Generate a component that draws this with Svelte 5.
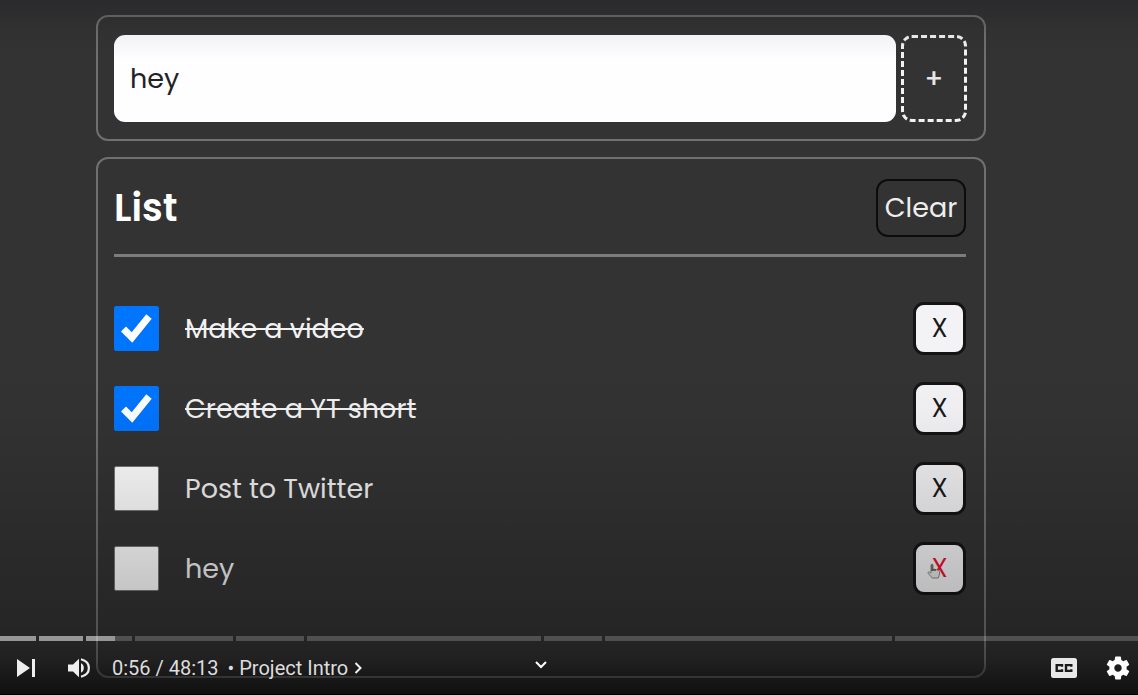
<script lang="ts">
  let draft = $state('hey');
  let items = $state([
    { id: 1, text: 'Make a video', done: true, hovered: false },
    { id: 2, text: 'Create a YT short', done: true, hovered: false },
    { id: 3, text: 'Post to Twitter', done: false, hovered: false },
    { id: 4, text: 'hey', done: false, hovered: true },
  ]);

  // Chapter lengths and how much of each is buffered
  const chapters = [
    { length: 36, loaded: 100 },
    { length: 44, loaded: 100 },
    { length: 46, loaded: 64 },
    { length: 98, loaded: 0 },
    { length: 68, loaded: 0 },
    { length: 234, loaded: 0 },
    { length: 58, loaded: 0 },
    { length: 287, loaded: 0 },
    { length: 243, loaded: 0 },
  ];

  function add(event: Event) {
    event.preventDefault();
    if (!draft.trim()) return;
    items.push({ id: Date.now(), text: draft, done: false, hovered: false });
    draft = '';
  }
  function remove(id: number) {
    items = items.filter((item) => item.id !== id);
  }
</script>

<div class="player">
  <main class="app">
    <form class="card entry" onsubmit={add}>
      <input class="field" type="text" aria-label="New item" bind:value={draft} />
      <button class="add" type="submit" aria-label="Add item">+</button>
    </form>

    <section class="card list">
      <header class="head">
        <h1>List</h1>
        <button class="clear" type="button" onclick={() => (items = [])}>Clear</button>
      </header>
      <ul>
        {#each items as item (item.id)}
          <li>
            <span class="tick">
              <input id="item-{item.id}" type="checkbox" bind:checked={item.done} />
              {#if item.done}
                <svg viewBox="0 0 45 45" aria-hidden="true">
                  <path d="M9.5 23 L18 31.5 L35 10.5" fill="none" stroke="#fff" stroke-width="7" />
                </svg>
              {/if}
            </span>
            <label for="item-{item.id}" class:done={item.done}>{item.text}</label>
            <button class="remove" class:hovered={item.hovered} type="button" onclick={() => remove(item.id)}>
              X
              {#if item.hovered}
                <svg class="hand" viewBox="0 0 14 16" aria-hidden="true">
                  <path d="M4 10V2.2C4 .8 6 .8 6 2.2V6.5C7 5.8 8 6 8.3 6.8C9.2 6.2 10.2 6.5 10.5 7.4C11.6 6.9 12.5 7.5 12.5 8.6V11L11.3 15H5.2L1.2 10.3C.5 9.2 1.8 8.4 2.7 9.2Z" fill="#e4e4e4" stroke="#888" stroke-width="1" />
                  <path d="M5 1.5V8M5 7H9" stroke="#555" stroke-width="1.4" fill="none" />
                </svg>
              {/if}
            </button>
          </li>
        {/each}
      </ul>
    </section>
  </main>

  <div class="chrome">
    <div class="progress">
      {#each chapters as chapter}
        <div class="chapter" style:flex-grow={chapter.length}>
          <div class="loaded" style:width="{chapter.loaded}%"></div>
        </div>
      {/each}
    </div>
    <div class="controls">
      <div class="left">
        <button class="icon next" type="button" aria-label="Next">
          <svg viewBox="0 0 20 20" width="20" height="20"><path d="M1 1L14 10L1 19ZM16 1H19V19H16Z" fill="#eee" /></svg>
        </button>
        <button class="icon volume" type="button" aria-label="Mute">
          <svg viewBox="0 0 22 20" width="22" height="20">
            <path d="M0 6.5H5L11 .8V19.2L5 13.5H0Z" fill="#eee" />
            <path d="M13 5.3C16.8 7.2 16.8 12.8 13 14.7Z" fill="#eee" />
            <path d="M13 1.2C23.5 3.8 23.5 16.2 13 18.8" fill="none" stroke="#eee" stroke-width="2.2" />
          </svg>
        </button>
        <span class="time">0:56 / 48:13</span>
        <button class="title" type="button">
          <span>• Project Intro</span>
          <svg viewBox="0 0 8 12" width="8" height="12"><path d="M1.5 1L6.5 6L1.5 11" fill="none" stroke="#eee" stroke-width="2" /></svg>
        </button>
      </div>
      <button class="icon more" type="button" aria-label="More">
        <svg viewBox="0 0 12 8" width="12" height="8"><path d="M1 1L6 6L11 1" fill="none" stroke="#fff" stroke-width="2" /></svg>
      </button>
      <div class="right">
        <button class="icon" type="button" aria-label="Subtitles">
          <svg viewBox="0 0 26 20" width="26" height="20">
            <rect width="26" height="20" rx="2.5" fill="#e8e8e8" />
            <path d="M11 8.8V7.1H5.7V12.9H11V11.2M20.3 8.8V7.1H15V12.9H20.3V11.2" fill="none" stroke="#1a1a1a" stroke-width="2.4" />
          </svg>
        </button>
        <button class="icon" type="button" aria-label="Settings">
          <svg viewBox="2 2 20 20" width="24" height="24">
            <path fill="#fff" d="M19.14 12.94c.04-.3.06-.61.06-.94 0-.32-.02-.64-.07-.94l2.03-1.58c.18-.14.23-.41.12-.61l-1.92-3.32c-.12-.22-.37-.29-.59-.22l-2.39.96c-.5-.38-1.03-.7-1.62-.94l-.36-2.54c-.04-.24-.24-.41-.48-.41h-3.84c-.24 0-.43.17-.47.41l-.36 2.54c-.59.24-1.13.57-1.62.94l-2.39-.96c-.22-.08-.47 0-.59.22L2.74 8.87c-.12.21-.08.47.12.61l2.03 1.58c-.05.3-.09.63-.09.94s.02.64.07.94l-2.03 1.58c-.18.14-.23.41-.12.61l1.92 3.32c.12.22.37.29.59.22l2.39-.96c.5.38 1.03.7 1.62.94l.36 2.54c.05.24.24.41.48.41h3.84c.24 0 .44-.17.47-.41l.36-2.54c.59-.24 1.13-.56 1.62-.94l2.39.96c.22.08.47 0 .59-.22l1.92-3.32c.12-.22.07-.47-.12-.61zM12 15.1c-1.7 0-3.1-1.4-3.1-3.1s1.4-3.1 3.1-3.1 3.1 1.4 3.1 3.1-1.4 3.1-3.1 3.1z" />
          </svg>
        </button>
      </div>
    </div>
  </div>
</div>

<style>
  :global(body) {
    margin: 0;
    background: #333;
  }
  .player {
    display: grid;
    min-height: 100vh;
    background: #333;
    font-family: Poppins, Inter, sans-serif;
  }
  .player * {
    box-sizing: border-box;
  }
  .app,
  .chrome {
    grid-area: 1 / 1;
    min-width: 0;
  }
  .app {
    display: flex;
    flex-direction: column;
    gap: 16px;
    padding: 15px 152px 17px 96px;
  }
  .card {
    border: 2px solid #707070;
    border-radius: 12px;
  }
  .entry {
    display: flex;
    gap: 5px;
    padding: 18px 17px 17px 16px;
  }
  .field {
    flex: 1;
    min-width: 0;
    height: 87px;
    padding: 0 16px;
    border: 0;
    border-radius: 11px;
    background: #fefdff;
    color: #222;
    font: 27px Poppins, Inter, sans-serif;
  }
  button {
    padding: 0;
    font-family: inherit;
    cursor: pointer;
  }
  .add {
    width: 66px;
    border: 3px dashed #f2f2f2;
    border-radius: 11px;
    background: none;
    color: #e6e6e6;
    font-size: 27px;
    font-weight: 500;
  }
  .list {
    flex: 1;
    padding: 20px 18px 40px 16px;
  }
  .head {
    display: flex;
    align-items: center;
    justify-content: space-between;
    padding-bottom: 17px;
    border-bottom: 3px solid #7c7c7c;
  }
  h1 {
    margin: 0;
    color: #fff;
    font-size: 38px;
    line-height: 56px;
    font-weight: 600;
  }
  .clear {
    width: 90px;
    height: 58px;
    border: 2px solid #0c0c0c;
    border-radius: 12px;
    background: none;
    color: #eee;
    font-size: 27px;
  }
  ul {
    display: flex;
    flex-direction: column;
    gap: 27px;
    margin: 0;
    padding: 45px 0 0;
    list-style: none;
  }
  li {
    display: flex;
    align-items: center;
    height: 53px;
  }
  .tick {
    display: grid;
    width: 45px;
    height: 45px;
    margin-right: 26px;
  }
  .tick > * {
    grid-area: 1 / 1;
  }
  .tick svg {
    pointer-events: none;
  }
  .tick input {
    appearance: none;
    width: 100%;
    height: 100%;
    margin: 0;
    border: 1px solid #777;
    border-radius: 2px;
    background: #fff;
  }
  .tick input:checked {
    border-color: #0075ff;
    background: #0075ff;
  }
  label {
    flex: 1;
    color: #f2f2f2;
    font-size: 27px;
  }
  .done {
    text-decoration: line-through;
    text-decoration-thickness: 2px;
  }
  .remove {
    position: relative;
    width: 53px;
    height: 53px;
    border: 3px solid #141414;
    border-radius: 11px;
    background: #f3f2f4;
    color: #1a1a1a;
    font-size: 26px;
  }
  .hovered {
    color: #ee1030;
  }
  .hand {
    position: absolute;
    left: 11px;
    top: 18px;
    width: 14px;
    height: 16px;
  }
  .chrome {
    display: flex;
    flex-direction: column;
    justify-content: flex-end;
    z-index: 1;
    pointer-events: none;
    border-bottom: 1px solid #000;
    background: linear-gradient(
      rgb(24 24 32 / 0.3) 0,
      rgb(24 24 32 / 0.05) 35px,
      transparent 60px,
      transparent 50%,
      rgb(0 0 0 / 0.02) 59%,
      rgb(0 0 0 / 0.1) 70%,
      rgb(0 0 0 / 0.2) 82%,
      rgb(0 0 0 / 0.28) 92%,
      rgb(0 0 0 / 0.36) 95%,
      rgb(0 0 0 / 0.5) 97%,
      rgb(0 0 0 / 0.67) 100%
    );
  }
  .chrome button {
    pointer-events: auto;
  }
  .progress {
    display: flex;
    gap: 3px;
  }
  .chapter {
    flex: 1 1 0;
    height: 5px;
    background: rgb(255 255 255 / 0.2);
  }
  .loaded {
    height: 100%;
    background: rgb(255 255 255 / 0.4);
  }
  .controls {
    display: grid;
    grid-template-columns: 8fr auto 9fr;
    align-items: center;
    height: 53px;
    padding: 0 8px 0 16px;
    font-family: Roboto, sans-serif;
  }
  .left,
  .right,
  .title {
    display: flex;
    align-items: center;
  }
  .right {
    justify-content: flex-end;
    gap: 29px;
  }
  .icon,
  .title {
    border: 0;
    background: none;
  }
  .icon {
    display: flex;
  }
  .more {
    padding-bottom: 6px;
  }
  .volume {
    margin: 0 22px 0 32px;
  }
  .time,
  .title {
    color: #ddd;
    font-size: 20px;
    line-height: 24px;
    white-space: nowrap;
  }
  .title {
    gap: 6px;
    margin-left: 9px;
  }
</style>
